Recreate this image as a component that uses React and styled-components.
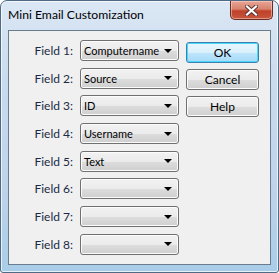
import React from "react";
import styled, { createGlobalStyle } from "styled-components";

const GlobalStyle = createGlobalStyle`
  html, body {
    margin: 0;
    padding: 0;
    background: #ffffff;
  }
  body {
    font-family: Lato, "Noto Sans", sans-serif;
  }
`;

const fields = [
  { label: "Field 1:", value: "Computername" },
  { label: "Field 2:", value: "Source" },
  { label: "Field 3:", value: "ID" },
  { label: "Field 4:", value: "Username" },
  { label: "Field 5:", value: "Text" },
  { label: "Field 6:", value: "" },
  { label: "Field 7:", value: "" },
  { label: "Field 8:", value: "" },
];

const buttons = [
  { label: "OK", primary: true },
  { label: "Cancel" },
  { label: "Help" },
];

const App = () => {
  return (
    <>
      <GlobalStyle />
      <Window>
        <TitleBar>
          <Title>Mini Email Customization</Title>
          <CloseButton>
            <svg width="13" height="11" viewBox="0 0 13 11">
              <path
                d="M2 1.5 L11 9.5 M11 1.5 L2 9.5"
                stroke="#5a3030"
                strokeWidth="4"
                strokeLinecap="square"
              />
              <path
                d="M2 1.5 L11 9.5 M11 1.5 L2 9.5"
                stroke="#ffffff"
                strokeWidth="2.2"
                strokeLinecap="square"
              />
            </svg>
          </CloseButton>
        </TitleBar>
        <Client>
          <FieldList>
            {fields.map((f) => (
              <FieldRow key={f.label}>
                <Label>{f.label}</Label>
                <Combo>
                  <ComboText>{f.value}</ComboText>
                  <Arrow />
                </Combo>
              </FieldRow>
            ))}
          </FieldList>
          <ButtonColumn>
            {buttons.map((b) => (
              <Button key={b.label} $primary={b.primary}>
                {b.label}
              </Button>
            ))}
          </ButtonColumn>
        </Client>
      </Window>
    </>
  );
};

const Window = styled.div`
  box-sizing: border-box;
  width: 279px;
  height: 273px;
  display: flex;
  flex-direction: column;
  border: 1px solid #4e6a85;
  border-radius: 7px 7px 3px 3px;
  background: linear-gradient(
    to bottom,
    #dbe7f4 0%,
    #c9dbee 30%,
    #bed3ea 70%,
    #a9cde8 100%
  );
  box-shadow: inset 0 0 0 1px rgba(255, 255, 255, 0.7);
  padding: 0 7px 7px 7px;
`;

const TitleBar = styled.div`
  height: 29px;
  display: flex;
  justify-content: space-between;
  align-items: flex-start;
`;

const Title = styled.div`
  font-size: 12.2px;
  color: #000000;
  padding-top: 6px;
`;

const CloseButton = styled.div`
  box-sizing: border-box;
  width: 43px;
  height: 19px;
  margin-right: -2px;
  display: flex;
  align-items: center;
  justify-content: center;
  border: 1px solid #6b2a22;
  border-top: none;
  border-radius: 0 0 5px 5px;
  background: linear-gradient(
    to bottom,
    #e8a596 0%,
    #d7826c 45%,
    #c0412a 55%,
    #c6563c 100%
  );
  box-shadow: inset 0 0 0 1px rgba(255, 220, 210, 0.5);
`;

const Client = styled.div`
  flex: 1;
  box-sizing: border-box;
  display: flex;
  background: #f0f0f0;
  border: 1px solid #6a7c90;
  padding: 9px 0 0 0;
`;

const FieldList = styled.div`
  display: flex;
  flex-direction: column;
  gap: 6.7px;
  width: 170px;
`;

const FieldRow = styled.div`
  display: flex;
  align-items: center;
  height: 21px;
`;

const Label = styled.div`
  width: 64px;
  text-align: right;
  font-size: 12px;
  color: #1b2a45;
  padding-right: 7px;
`;

const Combo = styled.div`
  box-sizing: border-box;
  width: 99px;
  height: 21px;
  display: flex;
  align-items: center;
  justify-content: space-between;
  border: 1px solid #707070;
  border-radius: 3px;
  background: linear-gradient(
    to bottom,
    #f2f2f2 0%,
    #ebebeb 50%,
    #dddddd 51%,
    #cfcfcf 100%
  );
  box-shadow: inset 0 0 0 1px #fcfcfc;
  padding: 0 6px 0 3px;
`;

const ComboText = styled.span`
  font-size: 11px;
  color: #000000;
`;

const Arrow = styled.span`
  flex-shrink: 0;
  width: 0;
  height: 0;
  border-left: 4px solid transparent;
  border-right: 4px solid transparent;
  border-top: 4px solid #000000;
`;

const ButtonColumn = styled.div`
  display: flex;
  flex-direction: column;
  gap: 6px;
  margin-left: 7px;
  padding-top: 2px;
`;

const Button = styled.div`
  box-sizing: border-box;
  width: 73px;
  height: 21px;
  display: flex;
  align-items: center;
  justify-content: center;
  font-size: 12px;
  color: #000000;
  border: 1px solid ${(p) => (p.$primary ? "#3c7fb1" : "#707070")};
  border-radius: 3px;
  background: ${(p) =>
    p.$primary
      ? "linear-gradient(to bottom, #eaf6fd 0%, #d9f0fc 50%, #bee6fd 51%, #a7d9f5 100%)"
      : "linear-gradient(to bottom, #f2f2f2 0%, #ebebeb 50%, #dddddd 51%, #cfcfcf 100%)"};
  box-shadow: inset 0 0 0 1px
    ${(p) => (p.$primary ? "#48d8fb" : "#fcfcfc")};
`;

export default App;
